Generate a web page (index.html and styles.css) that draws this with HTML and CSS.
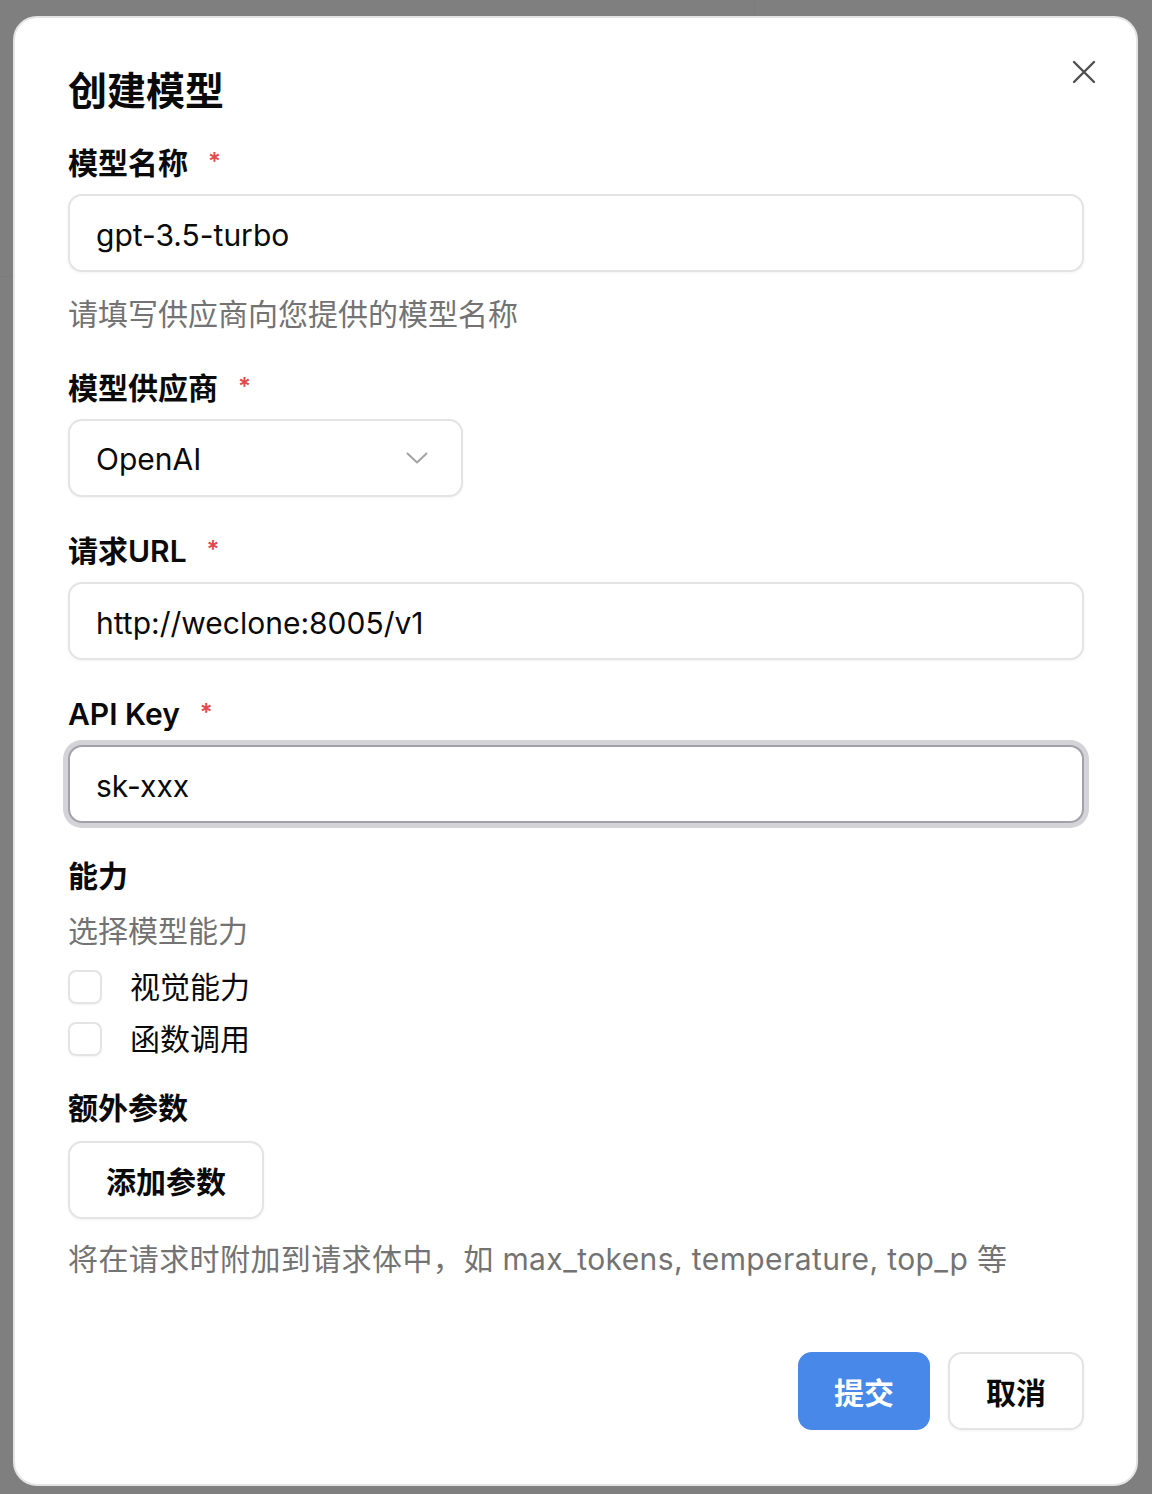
FILE: index.html
```html
<!DOCTYPE html>
<html lang="zh-CN">
<head>
    <meta charset="UTF-8">
    <meta name="viewport" content="width=device-width, initial-scale=1.0">
    <title>创建模型</title>
    <link rel="stylesheet" href="styles.css">
</head>
<body>
    <div class="overlay">
        <div class="dialog">
            <button class="close-btn" aria-label="关闭">
                <svg width="24" height="24" viewBox="0 0 24 24" fill="none" stroke="currentColor" stroke-width="2.4" stroke-linecap="round">
                    <path d="M2 2L22 22M22 2L2 22"/>
                </svg>
            </button>

            <h1 class="dialog-title">创建模型</h1>

            <div class="form-group">
                <label class="field-label">模型名称<span class="required">*</span></label>
                <input class="text-input" type="text" value="gpt-3.5-turbo">
                <p class="help-text help-below">请填写供应商向您提供的模型名称</p>
            </div>

            <div class="form-group">
                <label class="field-label">模型供应商<span class="required">*</span></label>
                <div class="select-box">
                    <span>OpenAI</span>
                    <svg class="chevron" width="22" height="12" viewBox="0 0 22 12" fill="none" stroke="currentColor" stroke-width="2" stroke-linecap="round" stroke-linejoin="round">
                        <path d="M1.5 1.5L11 10.5L20.5 1.5"/>
                    </svg>
                </div>
            </div>

            <div class="form-group">
                <label class="field-label">请求URL<span class="required">*</span></label>
                <input class="text-input" type="text" value="http://weclone:8005/v1">
            </div>

            <div class="form-group">
                <label class="field-label">API Key<span class="required">*</span></label>
                <input class="text-input focused" type="text" value="sk-xxx">
            </div>

            <div class="form-group">
                <label class="field-label">能力</label>
                <p class="help-text sub-help">选择模型能力</p>
                <div class="check-list">
                    <label class="check-row"><span class="checkbox"></span>视觉能力</label>
                    <label class="check-row"><span class="checkbox"></span>函数调用</label>
                </div>
            </div>

            <div class="form-group extra">
                <label class="field-label">额外参数</label>
                <button class="btn btn-outline add-btn">添加参数</button>
                <p class="help-text help-after-btn">将在请求时附加到请求体中，如 max_tokens, temperature, top_p 等</p>
            </div>

            <div class="dialog-footer">
                <button class="btn btn-primary">提交</button>
                <button class="btn btn-outline cancel-btn">取消</button>
            </div>
        </div>
    </div>
</body>
</html>
```

FILE: styles.css
```css
:root {
    --backdrop: #7f7f7f;
    --text: #0a0a0a;
    --muted: #737373;
    --border: #e4e4e7;
    --primary: #4788e8;
    --danger: #e5484d;
}

* {
    margin: 0;
    padding: 0;
    box-sizing: border-box;
}

body {
    background-color: var(--backdrop);
    background-image:
        linear-gradient(to right, transparent 754px, #7b7b7b 754px, #7b7b7b 755px, transparent 755px),
        linear-gradient(to bottom, transparent 276px, #7b7b7b 276px, #7b7b7b 277px, transparent 277px);
    background-repeat: no-repeat;
    background-size: 100% 16px, 13px 100%;
    color: var(--text);
    font-family: Inter, "Noto Sans CJK SC", sans-serif;
}

.overlay {
    padding: 16px 14px 8px 13px;
}

.dialog {
    position: relative;
    height: 1470px;
    background-color: #fff;
    border: 2px solid var(--border);
    border-radius: 24px;
    padding: 51px 52px 0 53px;
    display: flex;
    flex-direction: column;
}

.close-btn {
    position: absolute;
    top: 41px;
    right: 39px;
    width: 26px;
    height: 26px;
    border: none;
    background: none;
    color: #505050;
    display: flex;
    align-items: center;
    justify-content: center;
}

.dialog-title {
    font-size: 39px;
    line-height: 44px;
    font-weight: 700;
    margin-bottom: 29px;
}

.form-group {
    display: flex;
    flex-direction: column;
    margin-bottom: 33px;
}

.field-label {
    font-size: 30px;
    line-height: 40px;
    font-weight: 600;
    margin-bottom: 11px;
}

.required {
    color: var(--danger);
    font-size: 24px;
    margin-left: 20px;
    vertical-align: 4px;
}

.text-input,
.select-box {
    height: 78px;
    border: 2px solid var(--border);
    border-radius: 14px;
    padding: 0 26px;
    font-family: Inter, "Noto Sans CJK SC", sans-serif;
    font-size: 30px;
    color: var(--text);
    background: #fff;
    box-shadow: 0 1px 3px rgba(0, 0, 0, 0.05);
    outline: none;
}

.text-input {
    padding-top: 4px;
}

.text-input.focused {
    border-color: #a1a1aa;
    box-shadow: 0 0 0 5px #d4d4d8;
}

.select-box {
    width: 395px;
    display: flex;
    align-items: center;
    justify-content: space-between;
    padding-top: 2px;
    padding-right: 33px;
}

.chevron {
    color: #a3a3a3;
    margin-top: -2px;
}

.help-text {
    font-size: 30px;
    line-height: 40px;
    color: var(--muted);
}

.help-below {
    margin-top: 22px;
}

.sub-help {
    margin-top: 4px;
    margin-bottom: 16px;
}

.check-list {
    display: flex;
    flex-direction: column;
    gap: 12px;
}

.check-row {
    display: flex;
    align-items: center;
    gap: 28px;
    font-size: 30px;
    line-height: 40px;
}

.checkbox {
    width: 34px;
    height: 34px;
    border: 2px solid var(--border);
    border-radius: 8px;
    box-shadow: 0 1px 2px rgba(0, 0, 0, 0.05);
}

.form-group.extra {
    margin-top: -4px;
}

.btn {
    height: 78px;
    border-radius: 14px;
    font-family: Inter, "Noto Sans CJK SC", sans-serif;
    font-size: 30px;
    font-weight: 700;
    padding: 0 34px;
    cursor: pointer;
}

.btn-outline {
    background: #fff;
    color: var(--text);
    border: 2px solid var(--border);
    box-shadow: 0 1px 3px rgba(0, 0, 0, 0.05);
}

.btn-primary {
    background: var(--primary);
    color: #fff;
    border: 2px solid var(--primary);
}

.add-btn {
    width: 196px;
    margin-top: 2px;
}

.help-after-btn {
    margin-top: 20px;
    letter-spacing: 0.4px;
}

.dialog-footer {
    display: flex;
    justify-content: flex-end;
    gap: 18px;
    margin-top: 40px;
}

.cancel-btn {
    padding: 0 36px;
}
```
